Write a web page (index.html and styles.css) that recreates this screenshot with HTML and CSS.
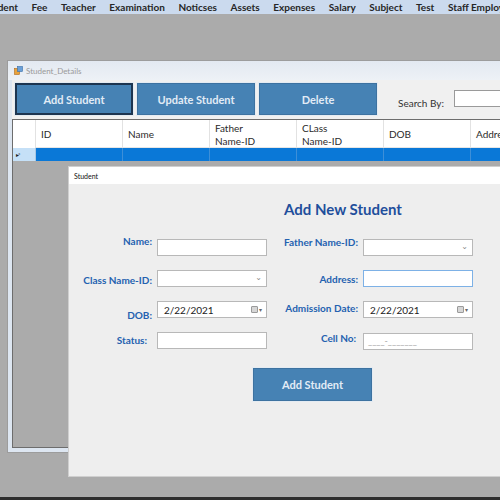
FILE: index.html
```html
<!DOCTYPE html>
<html>
<head>
<meta charset="utf-8">
<link rel="stylesheet" href="styles.css">
</head>
<body>
<nav class="menubar">
  <span>Student</span><span>Fee</span><span>Teacher</span><span>Examination</span><span>Noticses</span><span>Assets</span><span>Expenses</span><span>Salary</span><span>Subject</span><span>Test</span><span>Staff Employee</span>
</nav>
<main class="desktop">
  <section class="win details">
    <header class="titlebar">
      <svg class="app-icon" width="9" height="9" viewBox="0 0 9 9"><rect x="0.5" y="2.5" width="5" height="6" fill="#e8a23c" stroke="#b06a1a" stroke-width="0.6"/><rect x="3.5" y="0.5" width="5" height="5" fill="#6aa0d8" stroke="#3a6ea8" stroke-width="0.6"/></svg>
      <span>Student_Details</span>
    </header>
    <div class="client">
      <div class="toolbar">
        <button class="btn btn-focus">Add Student</button>
        <button class="btn">Update Student</button>
        <button class="btn">Delete</button>
        <label class="search-label">Search By:</label>
        <div class="search-box"></div>
      </div>
      <div class="grid">
        <div class="grid-head">
          <div class="rh"></div>
          <div class="hc">ID</div>
          <div class="hc">Name</div>
          <div class="hc">Father<br>Name-ID</div>
          <div class="hc">CLass<br>Name-ID</div>
          <div class="hc">DOB</div>
          <div class="hc">Address</div>
        </div>
        <div class="grid-row">
          <div class="rh rh-sel"><span class="marker">▸*</span></div>
          <div class="dc"></div><div class="dc"></div><div class="dc"></div><div class="dc"></div><div class="dc"></div><div class="dc"></div>
        </div>
      </div>
    </div>
  </section>

  <section class="win dialog">
    <header class="dlg-title">Student</header>
    <div class="dlg-client">
      <h1 class="heading">Add New Student</h1>
      <div class="form">
        <label class="lbl lbl-up">Name:</label>
        <div class="field"></div>
        <label class="lbl lbl-up2">Father Name-ID:</label>
        <div class="field combo"><span class="chev">⌄</span></div>

        <label class="lbl lbl-mid">Class Name-ID:</label>
        <div class="field combo"><span class="chev">⌄</span></div>
        <label class="lbl lbl-mid addr">Address:</label>
        <div class="field focus"></div>

        <label class="lbl lbl-down">DOB:</label>
        <div class="field date"><span>2/22/2021</span><span class="cal"><i></i>▾</span></div>
        <label class="lbl lbl-mid adm">Admission Date:</label>
        <div class="field date"><span>2/22/2021</span><span class="cal"><i></i>▾</span></div>

        <label class="lbl lbl-mid status">Status:</label>
        <div class="field"></div>
        <label class="lbl lbl-mid cell">Cell No:</label>
        <div class="field mask"><span>____-_______</span></div>
      </div>
      <button class="btn dlg-btn">Add Student</button>
    </div>
  </section>
</main>
<footer class="taskbar"></footer>
</body>
</html>
```

FILE: styles.css
```css
* { box-sizing: border-box; }
html, body { margin: 0; }
body {
  width: 500px;
  height: 500px;
  overflow: hidden;
  background: #ababab;
  font-family: Lato, "DejaVu Sans", sans-serif;
  position: relative;
}

.menubar {
  display: flex;
  gap: 13.6px;
  height: 14px;
  margin-left: -17px;
  align-items: center;
  background: #cbdaee;
  font-size: 10px;
  font-weight: 700;
  color: #262626;
  white-space: nowrap;
}

.desktop { position: relative; height: 486px; }

.win { position: absolute; }

.details {
  left: 7px;
  top: 46px;
  width: 540px;
  height: 393px;
  border: 1px solid #9c9c9c;
  background: #dde6f1;
  padding: 0 4px 4px 4px;
  display: flex;
  flex-direction: column;
}
.titlebar {
  height: 19px;
  display: flex;
  align-items: center;
  gap: 3px;
  font-size: 8px;
  color: #9a9a9a;
  background: linear-gradient(#e3e9f1, #edf1f6);
  margin: 0 -4px;
  padding-left: 6px;
}
.client {
  flex: 1;
  background: #f0f0f0;
  display: flex;
  flex-direction: column;
}
.toolbar {
  height: 39px;
  padding: 3px 0 0 3px;
  display: flex;
  gap: 4px;
  align-items: flex-start;
}
.btn {
  width: 118px;
  height: 32px;
  background: #4682b4;
  color: #e2ecf6;
  border: 1px solid #3d72a0;
  outline: 1px solid #e4ebf2;
  font-family: Lato, "DejaVu Sans", sans-serif;
  font-weight: 700;
  font-size: 11px;
  padding: 0;
}
.btn-focus { border: 2px solid #1d3550; }
.search-label {
  margin-left: 17px;
  margin-top: 14px;
  font-size: 10px;
  color: #333;
}
.search-box {
  margin-left: 6px;
  margin-top: 7px;
  width: 60px;
  height: 17px;
  background: #fff;
  border: 1px solid #9a9a9a;
}

.grid {
  flex: 1;
  border: 1px solid #6d6d6d;
  background: #ababab;
}
.grid-head {
  display: flex;
  height: 28px;
  background: #fff;
}
.rh { width: 23px; flex: none; border-right: 1px solid #e2e2e2; }
.hc {
  width: 87px;
  flex: none;
  border-right: 1px solid #e2e2e2;
  border-bottom: 1px solid #e6e6e6;
  padding: 2px 0 0 5px;
  display: flex;
  align-items: center;
  font-size: 10px;
  line-height: 13px;
  color: #2a2a2a;
}
.grid-row {
  display: flex;
  height: 13px;
}
.rh-sel {
  background: #c5e0f7;
  border-right: 1px solid #a9c8e4;
  display: flex;
  align-items: center;
  padding-left: 3px;
}
.marker { font-size: 6px; color: #222; letter-spacing: -1px; }
.dc {
  width: 87px;
  flex: none;
  background: #0a78d7;
  border-right: 1px solid #3d8fd8;
}

.dialog {
  left: 68px;
  top: 152px;
  width: 460px;
  height: 311px;
  border: 1px solid #cfcfcf;
  background: #eeeeee;
  display: flex;
  flex-direction: column;
}
.dlg-title {
  height: 17px;
  background: #fff;
  font-size: 7px;
  color: #111;
  padding-left: 5px;
  display: flex;
  align-items: center;
}
.dlg-client { flex: 1; padding-top: 15px; }
.heading {
  margin: 0 0 20px 215px;
  font-size: 15px;
  line-height: 20px;
  font-weight: 700;
  color: #1f4f9c;
}
.form {
  display: grid;
  grid-template-columns: 73px 110px 86px 110px;
  grid-auto-rows: 17px;
  column-gap: 5px;
  row-gap: 14px;
  padding-left: 10px;
}
.lbl {
  justify-self: end;
  font-size: 10px;
  font-weight: 700;
  color: #2461b0;
  line-height: 12px;
  white-space: nowrap;
}
.lbl-up { align-self: start; margin-top: -4px; }
.lbl-up2 { align-self: start; margin-top: -3px; }
.lbl-mid { align-self: center; margin-top: 3px; }
.lbl-down { align-self: end; margin-bottom: -3px; }
.addr { margin-top: 1px; }
.adm { margin-top: -3px; }
.status { margin-top: -2px; margin-right: 5px; }
.cell { margin-top: -6px; margin-right: 2px; }

.field {
  background: #fff;
  border: 1px solid #b8b8b8;
  display: flex;
  align-items: center;
  font-size: 10px;
  color: #222;
}
.combo { justify-content: flex-end; padding-right: 4px; }
.chev { font-size: 8px; color: #8a8a8a; line-height: 8px; margin-top: -3px; }
.focus { border-color: #7db1e6; }
.date { justify-content: space-between; padding: 0 4px 0 6px; }
.cal { display: flex; align-items: center; font-size: 6px; color: #666; }
.cal i {
  width: 7px;
  height: 7px;
  background: #d6d6d6;
  border: 1px solid #9a9a9a;
  border-radius: 1px;
  margin-right: 1px;
}
.mask {
  color: #a8a8a8;
  padding-left: 4px;
  font-size: 9px;
  line-height: 10px;
  margin-top: 1px;
  margin-bottom: -1px;
}
.mask span { margin-top: -2px; }
.dlg-btn {
  display: block;
  margin: 19px 0 0 184px;
  width: 119px;
  height: 33px;
  border: 1px solid #3d72a0;
}

.taskbar {
  position: absolute;
  left: 0;
  right: 0;
  bottom: 0;
  height: 3px;
  background: #2e2e2e;
}
```
